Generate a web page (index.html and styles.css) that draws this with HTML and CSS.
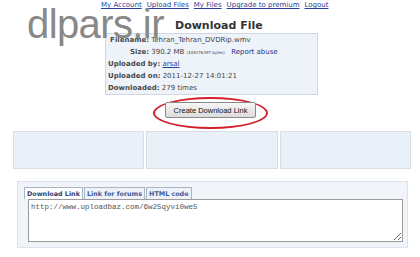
FILE: index.html
```html
<!DOCTYPE html>
<html lang="en">
  <head>
    <meta charset="UTF-8" />
    <title>Download File</title>
    <link rel="stylesheet" href="styles.css">
  </head>
  <body>
    <div class="page">
      <!-- header: logo with user links -->
      <div class="header">
        <div class="logo">dlpars.ir</div>
        <div class="nav">
          <a href="#">My Account</a>
          <a href="#">Upload Files</a>
          <a href="#">My Files</a>
          <a href="#">Upgrade to premium</a>
          <a href="#">Logout</a>
        </div>
        <h1 class="title">Download File</h1>
      </div>

      <!-- file details -->
      <div class="info">
        <div class="row"><span class="lbl right">Filename:</span> Tehran_Tehran_DVDRip.wmv</div>
        <div class="row"><span class="lbl right">Size:</span> 390.2 MB <small>(409176397 bytes)</small> <a href="#" class="report">Report abuse</a></div>
        <div class="row"><span class="lbl">Uploaded by:</span> <a href="#" class="user">arsal</a></div>
        <div class="row"><span class="lbl">Uploaded on:</span> 2011-12-27 14:01:21</div>
        <div class="row"><span class="lbl">Downloaded:</span> 279 times</div>
      </div>

      <div class="action">
        <div class="circle">
          <button type="button" class="create">Create Download Link</button>
        </div>
      </div>

      <!-- empty ad boxes -->
      <div class="boxes">
        <div class="box"></div>
        <div class="box"></div>
        <div class="box"></div>
      </div>

      <!-- link tabs -->
      <div class="tabs">
        <div class="tabbar">
          <span class="tab active">Download Link</span>
          <span class="tab">Link for forums</span>
          <span class="tab">HTML code</span>
        </div>
        <textarea class="code">http://www.uploadbaz.com/6w25qyvi0we5</textarea>
      </div>
    </div>
  </body>
</html>
```

FILE: styles.css
```css
body {
  margin: 0;
  background: #ffffff;
  font-family: Tahoma, "DejaVu Sans", sans-serif;
  font-size: 8px;
  color: #333333;
}

.page {
  width: 420px;
  height: 257px;
  overflow: hidden;
}

/* header */
.header {
  position: relative;
  height: 33px;
}

.logo {
  position: absolute;
  left: 27px;
  top: 2px;
  font-family: "Liberation Sans", Arial, sans-serif;
  font-size: 40px;
  color: #888888;
  letter-spacing: -0.6px;
}

.nav {
  display: flex;
  gap: 5px;
  padding: 1px 0 0 101px;
  font-family: "DejaVu Sans", sans-serif;
  font-size: 7px;
}

.nav a {
  color: #2a3f9a;
}

.title {
  margin: 0;
  padding: 10px 0 0 175px;
  font-family: "DejaVu Sans", sans-serif;
  font-size: 11px;
  font-weight: bold;
  color: #333333;
}

/* info box */
.info {
  margin-left: 105px;
  width: 211px;
  height: 59px;
  padding-top: 1px;
  background: #eef3f9;
  border: 1px solid #cdd8e4;
  font-family: "DejaVu Sans", sans-serif;
  font-size: 7px;
  color: #444444;
}

.row {
  height: 12px;
  line-height: 11px;
  padding-left: 2px;
  white-space: nowrap;
}

.lbl {
  font-weight: bold;
  color: #4a4a4a;
}

.lbl.right {
  display: inline-block;
  width: 41px;
  text-align: right;
}

.row small {
  font-size: 4px;
}

.report {
  margin-left: 4px;
  color: #1f2f8a;
  text-decoration: none;
}

.user {
  color: #2a3f9a;
}

/* create button with red ring */
.action {
  display: flex;
  justify-content: center;
  padding: 2px 0 0 1px;
}

.circle {
  width: 111px;
  height: 25px;
  padding-top: 3px;
  border: 2px solid #d31f2b;
  border-radius: 50%;
  display: flex;
  justify-content: center;
}

.create {
  width: 91px;
  height: 16px;
  padding: 0;
  font-family: "Liberation Sans", Arial, sans-serif;
  font-size: 7.5px;
  color: #111111;
  background: linear-gradient(#f6f6f6, #dcdcdc);
  border: 1px solid #8a8a8a;
  border-radius: 2px;
}

/* ad boxes */
.boxes {
  display: flex;
  gap: 2px;
  padding: 2px 9px 0 13px;
}

.box {
  flex: 1;
  height: 36px;
  background: #e9f0f7;
  border: 1px solid #d6dfe8;
}

/* tabs */
.tabs {
  margin: 12px 12px 0 17px;
  height: 60px;
  padding: 5px 4px 0 6px;
  background: #f1f4f9;
  border: 1px solid #dde3ec;
}

.tabbar {
  display: flex;
  gap: 1px;
}

.tab {
  padding: 2px 2px 1px;
  font-family: "DejaVu Sans", sans-serif;
  font-size: 6.4px;
  font-weight: bold;
  color: #3a5a9a;
  background: #eef2f8;
  border: 1px solid #a9b5c6;
  border-bottom: none;
}

.tab.active {
  color: #2e3e6a;
  background: #ffffff;
}

.code {
  display: block;
  width: 375px;
  height: 43px;
  margin: 0 0 0 4px;
  padding: 3px 2px;
  box-sizing: border-box;
  font-family: "Liberation Mono", "Courier New", monospace;
  font-size: 7.5px;
  color: #555555;
  border: 1px solid #9a9a9a;
  resize: both;
}
```
